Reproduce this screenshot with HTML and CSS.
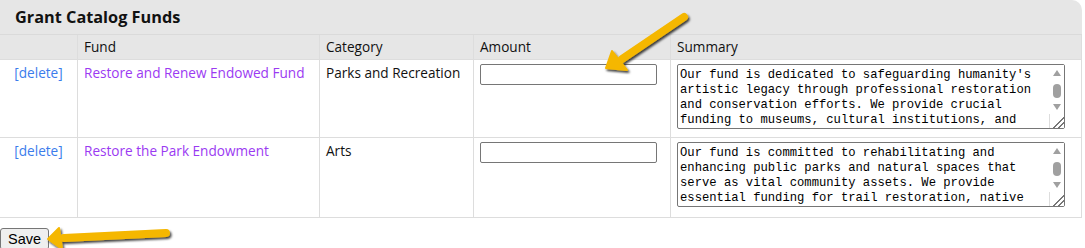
FILE: index.html
```html
<!DOCTYPE html>
<html lang="en">
<head>
    <meta charset="UTF-8">
    <title>Grant Catalog Funds</title>
    <link rel="stylesheet" href="styles.css">
</head>
<body>
    <div class="panel">
        <h2 class="panel-title">Grant Catalog Funds</h2>
        <table class="funds">
            <thead>
                <tr>
                    <th class="col-action"></th>
                    <th class="col-fund">Fund</th>
                    <th class="col-category">Category</th>
                    <th class="col-amount">Amount</th>
                    <th>Summary</th>
                </tr>
            </thead>
            <tbody>
                <tr>
                    <td class="action"><a href="#" class="delete">[delete]</a></td>
                    <td><a href="#" class="fund-link">Restore and Renew Endowed Fund</a></td>
                    <td>Parks and Recreation</td>
                    <td><input type="text" class="amount"></td>
                    <td>
                        <div class="summary-box">
                            <textarea class="summary">Our fund is dedicated to safeguarding humanity's artistic legacy through professional restoration and conservation efforts. We provide crucial funding to museums, cultural institutions, and independent conservators who work to preserve paintings, sculptures and historic artifacts for future generations.</textarea>
                            <div class="scrollbar"><span class="sb-up"></span><span class="sb-thumb"></span><span class="sb-down"></span></div>
                        </div>
                    </td>
                </tr>
                <tr>
                    <td class="action"><a href="#" class="delete">[delete]</a></td>
                    <td><a href="#" class="fund-link">Restore the Park Endowment</a></td>
                    <td>Arts</td>
                    <td><input type="text" class="amount"></td>
                    <td>
                        <div class="summary-box">
                            <textarea class="summary">Our fund is committed to rehabilitating and enhancing public parks and natural spaces that serve as vital community assets. We provide essential funding for trail restoration, native plantings, playground repairs and volunteer stewardship programs.</textarea>
                            <div class="scrollbar"><span class="sb-up"></span><span class="sb-thumb"></span><span class="sb-down"></span></div>
                        </div>
                    </td>
                </tr>
            </tbody>
        </table>
    </div>

    <button class="save-button">Save</button>

    <!-- Callout arrows -->
    <svg class="callout callout-amount" width="100" height="70" viewBox="0 0 100 70">
        <defs>
            <filter id="shadowA" x="-20%" y="-20%" width="160%" height="160%">
                <feDropShadow dx="1.5" dy="2" stdDeviation="1.2" flood-color="#000" flood-opacity="0.75"/>
            </filter>
        </defs>
        <g filter="url(#shadowA)">
            <line x1="84" y1="13" x2="22" y2="55" stroke="#f5b700" stroke-width="8" stroke-linecap="round"/>
            <polygon points="6,64 12,47 27,66" fill="#f5b700" stroke="#f5b700" stroke-width="2" stroke-linejoin="round"/>
        </g>
    </svg>

    <svg class="callout callout-save" width="140" height="40" viewBox="0 0 140 40">
        <defs>
            <filter id="shadowB" x="-20%" y="-40%" width="140%" height="200%">
                <feDropShadow dx="1.5" dy="2" stdDeviation="1.2" flood-color="#000" flood-opacity="0.75"/>
            </filter>
        </defs>
        <g filter="url(#shadowB)">
            <line x1="122" y1="12" x2="20" y2="17" stroke="#f5b700" stroke-width="8" stroke-linecap="round"/>
            <polygon points="4,18 15,7 18,28" fill="#f5b700" stroke="#f5b700" stroke-width="2" stroke-linejoin="round"/>
        </g>
    </svg>
</body>
</html>
```

FILE: styles.css
```css
/* General Styles */
body {
    margin: 0;
    font-family: "Open Sans", "Noto Sans", sans-serif;
    font-size: 13.6px;
    color: #111;
    background-color: #fff;
}

.panel {
    width: 1082px;
    background-color: #e6e6e6;
    border-top-right-radius: 10px;
}

.panel-title {
    margin: 0;
    height: 34px;
    padding-left: 15px;
    font-size: 16.3px;
    font-weight: bold;
    line-height: 34px;
    border-bottom: 1px solid #dadada;
}

.funds {
    width: 100%;
    table-layout: fixed;
    border-collapse: collapse;
    background-color: #fff;
}

.funds th,
.funds td {
    border: 1px solid #ddd;
    padding: 4px 6px;
    text-align: left;
    vertical-align: top;
    line-height: 17px;
}

.funds th {
    background-color: #e6e6e6;
    font-weight: normal;
    height: 16px;
    padding-top: 3px;
    padding-bottom: 4px;
    border-top: none;
}

.funds th:first-child,
.funds td:first-child {
    border-left: none;
}

.col-action {
    width: 65px;
}

.col-fund {
    width: 229px;
}

.col-category {
    width: 141px;
}

.col-amount {
    width: 184px;
}

.funds td {
    padding-bottom: 8px;
}

.funds tbody tr:last-child td {
    padding-top: 4px;
    padding-bottom: 10px;
}

.funds td.action {
    text-align: center;
}

.delete {
    color: #3b7cec;
    text-decoration: none;
}

.fund-link {
    color: #9b3af2;
    text-decoration: none;
}

.amount {
    display: block;
    box-sizing: border-box;
    width: 177px;
    height: 21px;
    margin: 0;
    border: 1px solid #767676;
    border-radius: 2px;
    padding: 1px 2px;
}

.summary-box {
    position: relative;
    width: 388px;
    height: 65px;
}

.summary {
    display: block;
    box-sizing: border-box;
    width: 388px;
    height: 65px;
    margin: 0;
    padding: 3px 20px 2px 2px;
    border: 1px solid #767676;
    border-radius: 2px;
    font-family: "Liberation Mono", monospace;
    font-size: 12.2px;
    line-height: 15px;
    color: #000;
    resize: both;
    overflow: hidden;
}

.summary::-webkit-resizer {
    background-color: #fff;
    border-top: 1px solid #ddd;
    border-left: 1px solid #ddd;
    background-image: linear-gradient(135deg, transparent 60%, #777 60%, #777 66%, transparent 66%, transparent 78%, #777 78%, #777 84%, transparent 84%);
}

/* Classic scrollbar drawn over the textarea's right edge */
.scrollbar {
    position: absolute;
    top: 1px;
    right: 1px;
    width: 15px;
    height: 49px;
    background-color: #fff;
    display: flex;
    flex-direction: column;
    align-items: center;
}

.sb-up {
    margin-top: 5px;
    width: 0;
    height: 0;
    border-left: 4px solid transparent;
    border-right: 4px solid transparent;
    border-bottom: 6px solid #a0a0a0;
}

.sb-thumb {
    margin-top: 8px;
    width: 8px;
    height: 14px;
    border-radius: 4px;
    background-color: #a0a0a0;
}

.sb-down {
    margin-top: 6px;
    width: 0;
    height: 0;
    border-left: 4px solid transparent;
    border-right: 4px solid transparent;
    border-top: 6px solid #a0a0a0;
}

.save-button {
    display: block;
    margin: 10px 0 0 0;
    font-family: "Liberation Sans", Arial, sans-serif;
    font-size: 14.5px;
    padding: 2px 7px;
    border: 1px solid #767676;
    border-radius: 3px;
    background-color: #efefef;
    color: #000;
}

/* Callout arrows drawn over the page */
.callout {
    position: absolute;
    overflow: visible;
}

.callout-amount {
    left: 600px;
    top: 4px;
}

.callout-save {
    left: 44px;
    top: 221px;
}
```
